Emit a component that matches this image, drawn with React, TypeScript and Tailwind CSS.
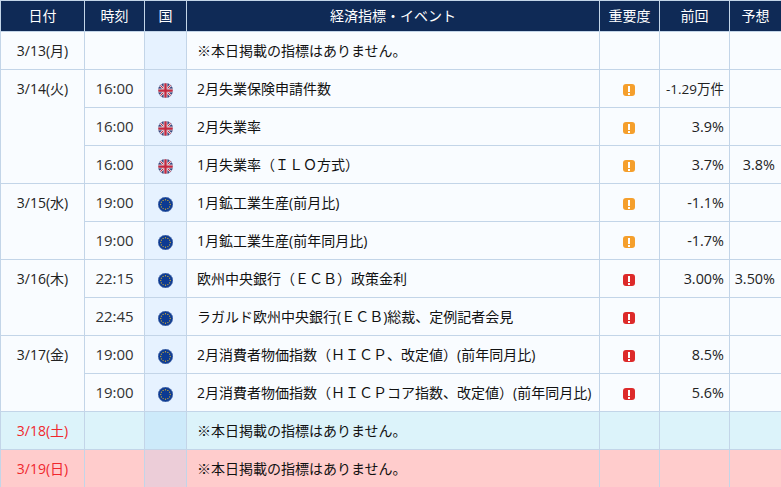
type Level = "mid" | "high";
type Flag = "uk" | "eu";

type Row = {
  date?: string;
  span?: number;
  time?: string;
  flag?: Flag;
  name: string;
  level?: Level;
  prev?: string;
  fore?: string;
  tone?: "sat" | "sun";
};

const rows: Row[] = [
  { date: "3/13(月)", span: 1, name: "※本日掲載の指標はありません。" },
  { date: "3/14(火)", span: 3, time: "16:00", flag: "uk", name: "2月失業保険申請件数", level: "mid", prev: "-1.29万件" },
  { time: "16:00", flag: "uk", name: "2月失業率", level: "mid", prev: "3.9%" },
  { time: "16:00", flag: "uk", name: "1月失業率（ＩＬＯ方式）", level: "mid", prev: "3.7%", fore: "3.8%" },
  { date: "3/15(水)", span: 2, time: "19:00", flag: "eu", name: "1月鉱工業生産(前月比)", level: "mid", prev: "-1.1%" },
  { time: "19:00", flag: "eu", name: "1月鉱工業生産(前年同月比)", level: "mid", prev: "-1.7%" },
  { date: "3/16(木)", span: 2, time: "22:15", flag: "eu", name: "欧州中央銀行（ＥＣＢ）政策金利", level: "high", prev: "3.00%", fore: "3.50%" },
  { time: "22:45", flag: "eu", name: "ラガルド欧州中央銀行(ＥＣＢ)総裁、定例記者会見", level: "high" },
  { date: "3/17(金)", span: 2, time: "19:00", flag: "eu", name: "2月消費者物価指数（ＨＩＣＰ、改定値）(前年同月比)", level: "high", prev: "8.5%" },
  { time: "19:00", flag: "eu", name: "2月消費者物価指数（ＨＩＣＰコア指数、改定値）(前年同月比)", level: "high", prev: "5.6%" },
  { date: "3/18(土)", span: 1, name: "※本日掲載の指標はありません。", tone: "sat" },
  { date: "3/19(日)", span: 1, name: "※本日掲載の指標はありません。", tone: "sun" },
];

function FlagIcon({ flag }: { flag: Flag }) {
  if (flag === "uk") {
    return (
      <svg width="15" height="15" viewBox="0 0 30 30" className="mx-auto mt-[3px] block">
        <defs>
          <clipPath id="uk-clip">
            <circle cx="15" cy="15" r="15" />
          </clipPath>
        </defs>
        <g clipPath="url(#uk-clip)">
          <rect width="30" height="30" fill="#1c2f6e" />
          <path d="M0 0 L30 30 M30 0 L0 30" stroke="#d9c9d4" strokeWidth="5" />
          <path d="M0 0 L30 30 M30 0 L0 30" stroke="#c4283f" strokeWidth="2" />
          <path d="M15 0 V30 M0 15 H30" stroke="#ddd0d8" strokeWidth="8" />
          <path d="M15 0 V30 M0 15 H30" stroke="#c4283f" strokeWidth="4.5" />
        </g>
        <circle cx="15" cy="15" r="14.5" fill="none" stroke="#b9b6cc" strokeWidth="1" />
      </svg>
    );
  }
  const stars = Array.from({ length: 12 }, (_, i) => {
    const a = (i * Math.PI) / 6;
    return { x: 15 + 9.5 * Math.cos(a), y: 15 + 9.5 * Math.sin(a) };
  });
  return (
    <svg width="15" height="15" viewBox="0 0 30 30" className="mx-auto mt-[3px] block">
      <circle cx="15" cy="15" r="15" fill="#0c3a92" />
      <circle cx="15" cy="15" r="14.5" fill="none" stroke="#7f96c4" strokeWidth="1" />
      {stars.map((s, i) => (
        <circle key={i} cx={s.x} cy={s.y} r="1.3" fill="#c9a93a" />
      ))}
    </svg>
  );
}

function Alert({ level }: { level: Level }) {
  const bg = level === "high" ? "bg-[#dd2a2a]" : "bg-[#f59f2c]";
  return (
    <span className={`mx-auto mt-[3px] flex h-3 w-3 flex-col items-center justify-center gap-px rounded-[3px] ${bg}`}>
      <span className="h-[6px] w-[2px] bg-[#fff]" />
      <span className="h-[2px] w-[2px] bg-[#fff]" />
    </span>
  );
}

export default function App() {
  const head = "border border-[#c3d5e8] font-normal text-center";
  const cell = "border border-[#c3d5e8] h-[38px] p-0";
  return (
    <div className="h-[487px] w-[781px] overflow-hidden bg-[#ffffff] text-[14px] leading-[20px] text-[#222222] [font-family:'Open_Sans','Noto_Sans_CJK_JP',sans-serif]">
      <table className="w-[781px] table-fixed border-collapse">
        <colgroup>
          <col className="w-[84px]" />
          <col className="w-[60px]" />
          <col className="w-[42px]" />
          <col className="w-[413px]" />
          <col className="w-[60px]" />
          <col className="w-[70px]" />
          <col className="w-[52px]" />
        </colgroup>
        <thead>
          <tr className="h-[31px] bg-[#0f2a56] text-[#ffffff]">
            <th className={head}>日付</th>
            <th className={head}>時刻</th>
            <th className={head}>国</th>
            <th className={head}>経済指標・イベント</th>
            <th className={head}>重要度</th>
            <th className={head}>前回</th>
            <th className={head}>予想</th>
          </tr>
        </thead>
        <tbody>
          {rows.map((r, i) => {
            const rowBg =
              r.tone === "sat" ? "bg-[#dcf3fa]" : r.tone === "sun" ? "bg-[#ffcccc]" : "bg-[#f9fcff]";
            const flagBg =
              r.tone === "sat" ? "bg-[#cdeafa]" : r.tone === "sun" ? "bg-[#eccdd8]" : "bg-[#e6f2ff]";
            const dateColor = r.tone ? "text-[#f0272d]" : "";
            const prevSize = r.prev?.includes("万") ? "text-[13.5px]" : "text-[14.4px]";
            return (
              <tr key={i} className={rowBg}>
                {r.date && (
                  <td rowSpan={r.span} className={`${cell} ${dateColor} pt-[9px] text-center align-top`}>
                    {r.date}
                  </td>
                )}
                <td className={`${cell} pb-[2px] text-center text-[15px] text-[#333333]`}>{r.time}</td>
                <td className={`${cell} ${flagBg}`}>{r.flag && <FlagIcon flag={r.flag} />}</td>
                <td className={`${cell} whitespace-nowrap pl-[10px] text-[#111111]`}>{r.name}</td>
                <td className={`${cell} pr-[2px]`}>{r.level && <Alert level={r.level} />}</td>
                <td className={`${cell} ${prevSize} whitespace-nowrap pr-[5px] text-right`}>{r.prev}</td>
                <td className={`${cell} whitespace-nowrap pr-[6px] text-right text-[14.4px]`}>{r.fore}</td>
              </tr>
            );
          })}
        </tbody>
      </table>
    </div>
  );
}
